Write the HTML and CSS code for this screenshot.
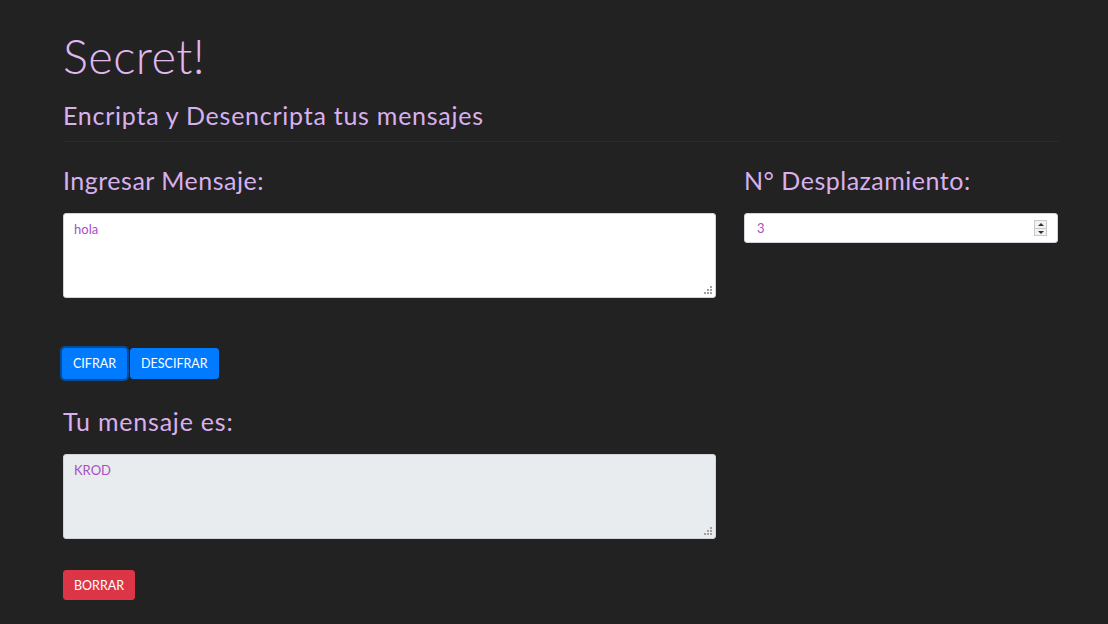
FILE: index.html
```html
<!DOCTYPE html>
<html lang="es">
<head>
<meta charset="utf-8">
<title>Secret!</title>
<link rel="stylesheet" href="styles.css">
</head>
<body>
<main class="page">
  <header class="intro">
    <h1 class="title">Secret!</h1>
    <h2 class="subtitle">Encripta y Desencripta tus mensajes</h2>
  </header>
  <div class="rule"></div>
  <section class="grid">
    <div class="col-main">
      <label class="label" for="msg">Ingresar Mensaje:</label>
      <textarea id="msg" class="field area">hola</textarea>
    </div>
    <div class="col-side">
      <label class="label" for="shift">N° Desplazamiento:</label>
      <div class="num-wrap">
        <input id="shift" class="field num" type="text" value="3">
        <span class="spin"><span class="spin-up"></span><span class="spin-down"></span></span>
      </div>
    </div>
  </section>
  <div class="actions">
    <button class="btn btn-blue btn-focus">CIFRAR</button>
    <button class="btn btn-blue">DESCIFRAR</button>
  </div>
  <section class="result">
    <label class="label label-wide" for="out">Tu mensaje es:</label>
    <textarea id="out" class="field area readonly" readonly>KROD</textarea>
  </section>
  <div class="actions-bottom">
    <button class="btn btn-red">BORRAR</button>
  </div>
</main>
</body>
</html>
```

FILE: styles.css
```css
* { box-sizing: border-box; }
html, body { margin: 0; padding: 0; }
body {
  background: #222222;
  font-family: "Lato", "Open Sans", sans-serif;
  color: #dda8ea;
  width: 1108px;
  height: 624px;
  overflow: hidden;
}
.page {
  width: 995px;
  margin-left: 63px;
}
.title {
  margin: 0;
  padding-top: 28px;
  font-size: 47px;
  font-weight: 300;
  line-height: 56px;
  color: #e1b8f0;
  letter-spacing: 0.4px;
}
.subtitle {
  margin: 0;
  margin-top: 16px;
  font-size: 25px;
  font-weight: 400;
  line-height: 30px;
  color: #d9b0ee;
  letter-spacing: 0.75px;
}
.rule {
  margin-top: 11px;
  height: 1px;
  background: #2b2b2b;
}
.grid {
  display: grid;
  grid-template-columns: 653px 314px;
  column-gap: 28px;
  margin-top: 23px;
}
.label {
  display: block;
  font-size: 25px;
  font-weight: 400;
  line-height: 30px;
  color: #d9b0ee;
  margin-bottom: 18px;
  letter-spacing: 0.5px;
}
.label-wide { letter-spacing: 0.8px; }
.field {
  display: block;
  width: 100%;
  border: 1px solid #ced4da;
  border-radius: 3px;
  background-color: #ffffff;
  font-family: "Lato", "Open Sans", sans-serif;
  font-size: 13px;
  color: #a84ec4;
  padding: 8px 10px;
  outline: none;
}
.area {
  height: 85px;
  resize: none;
  line-height: 14px;
  background-image: url("data:image/svg+xml;utf8,<svg xmlns='http://www.w3.org/2000/svg' width='8' height='8'><g fill='%23a0a0a0'><rect x='6' y='0' width='2' height='2'/><rect x='3' y='3' width='2' height='2'/><rect x='6' y='3' width='2' height='2'/><rect x='0' y='6' width='2' height='2'/><rect x='3' y='6' width='2' height='2'/><rect x='6' y='6' width='2' height='2'/></g></svg>");
  background-repeat: no-repeat;
  background-position: right 3px bottom 3px;
}
.readonly {
  background-color: #e9ecef;
}
.num-wrap {
  position: relative;
}
.num {
  height: 30px;
  padding: 6px 12px;
}
.spin {
  position: absolute;
  right: 11px;
  top: 7px;
  width: 13px;
  height: 16px;
  display: flex;
  flex-direction: column;
  border: 1px solid #c9c9c9;
  background: #f2f2f2;
}
.spin-up, .spin-down {
  flex: 1;
  position: relative;
}
.spin-up { border-bottom: 1px solid #c9c9c9; }
.spin-up::after, .spin-down::after {
  content: "";
  position: absolute;
  left: 3px;
  width: 0;
  height: 0;
  border-left: 3px solid transparent;
  border-right: 3px solid transparent;
}
.spin-up::after { top: 2px; border-bottom: 3px solid #333; }
.spin-down::after { top: 2px; border-top: 3px solid #333; }
.actions {
  display: flex;
  gap: 3px;
  margin-top: 50px;
}
.btn {
  font-family: "Lato", "Open Sans", sans-serif;
  font-size: 12.5px;
  height: 31px;
  padding: 0 10px;
  border: 1px solid transparent;
  border-radius: 3px;
  color: #ffffff;
  cursor: pointer;
}
.btn-blue { background: #007bff; border-color: #007bff; }
.btn-focus {
  margin-left: -1px;
  box-shadow: 0 0 0 2px rgba(0, 90, 190, 0.75);
}
.btn-red { background: #dc3545; border-color: #dc3545; height: 30px; }
.result {
  margin-top: 27px;
}
.result .area { width: 653px; }
.actions-bottom {
  margin-top: 31px;
}
```
